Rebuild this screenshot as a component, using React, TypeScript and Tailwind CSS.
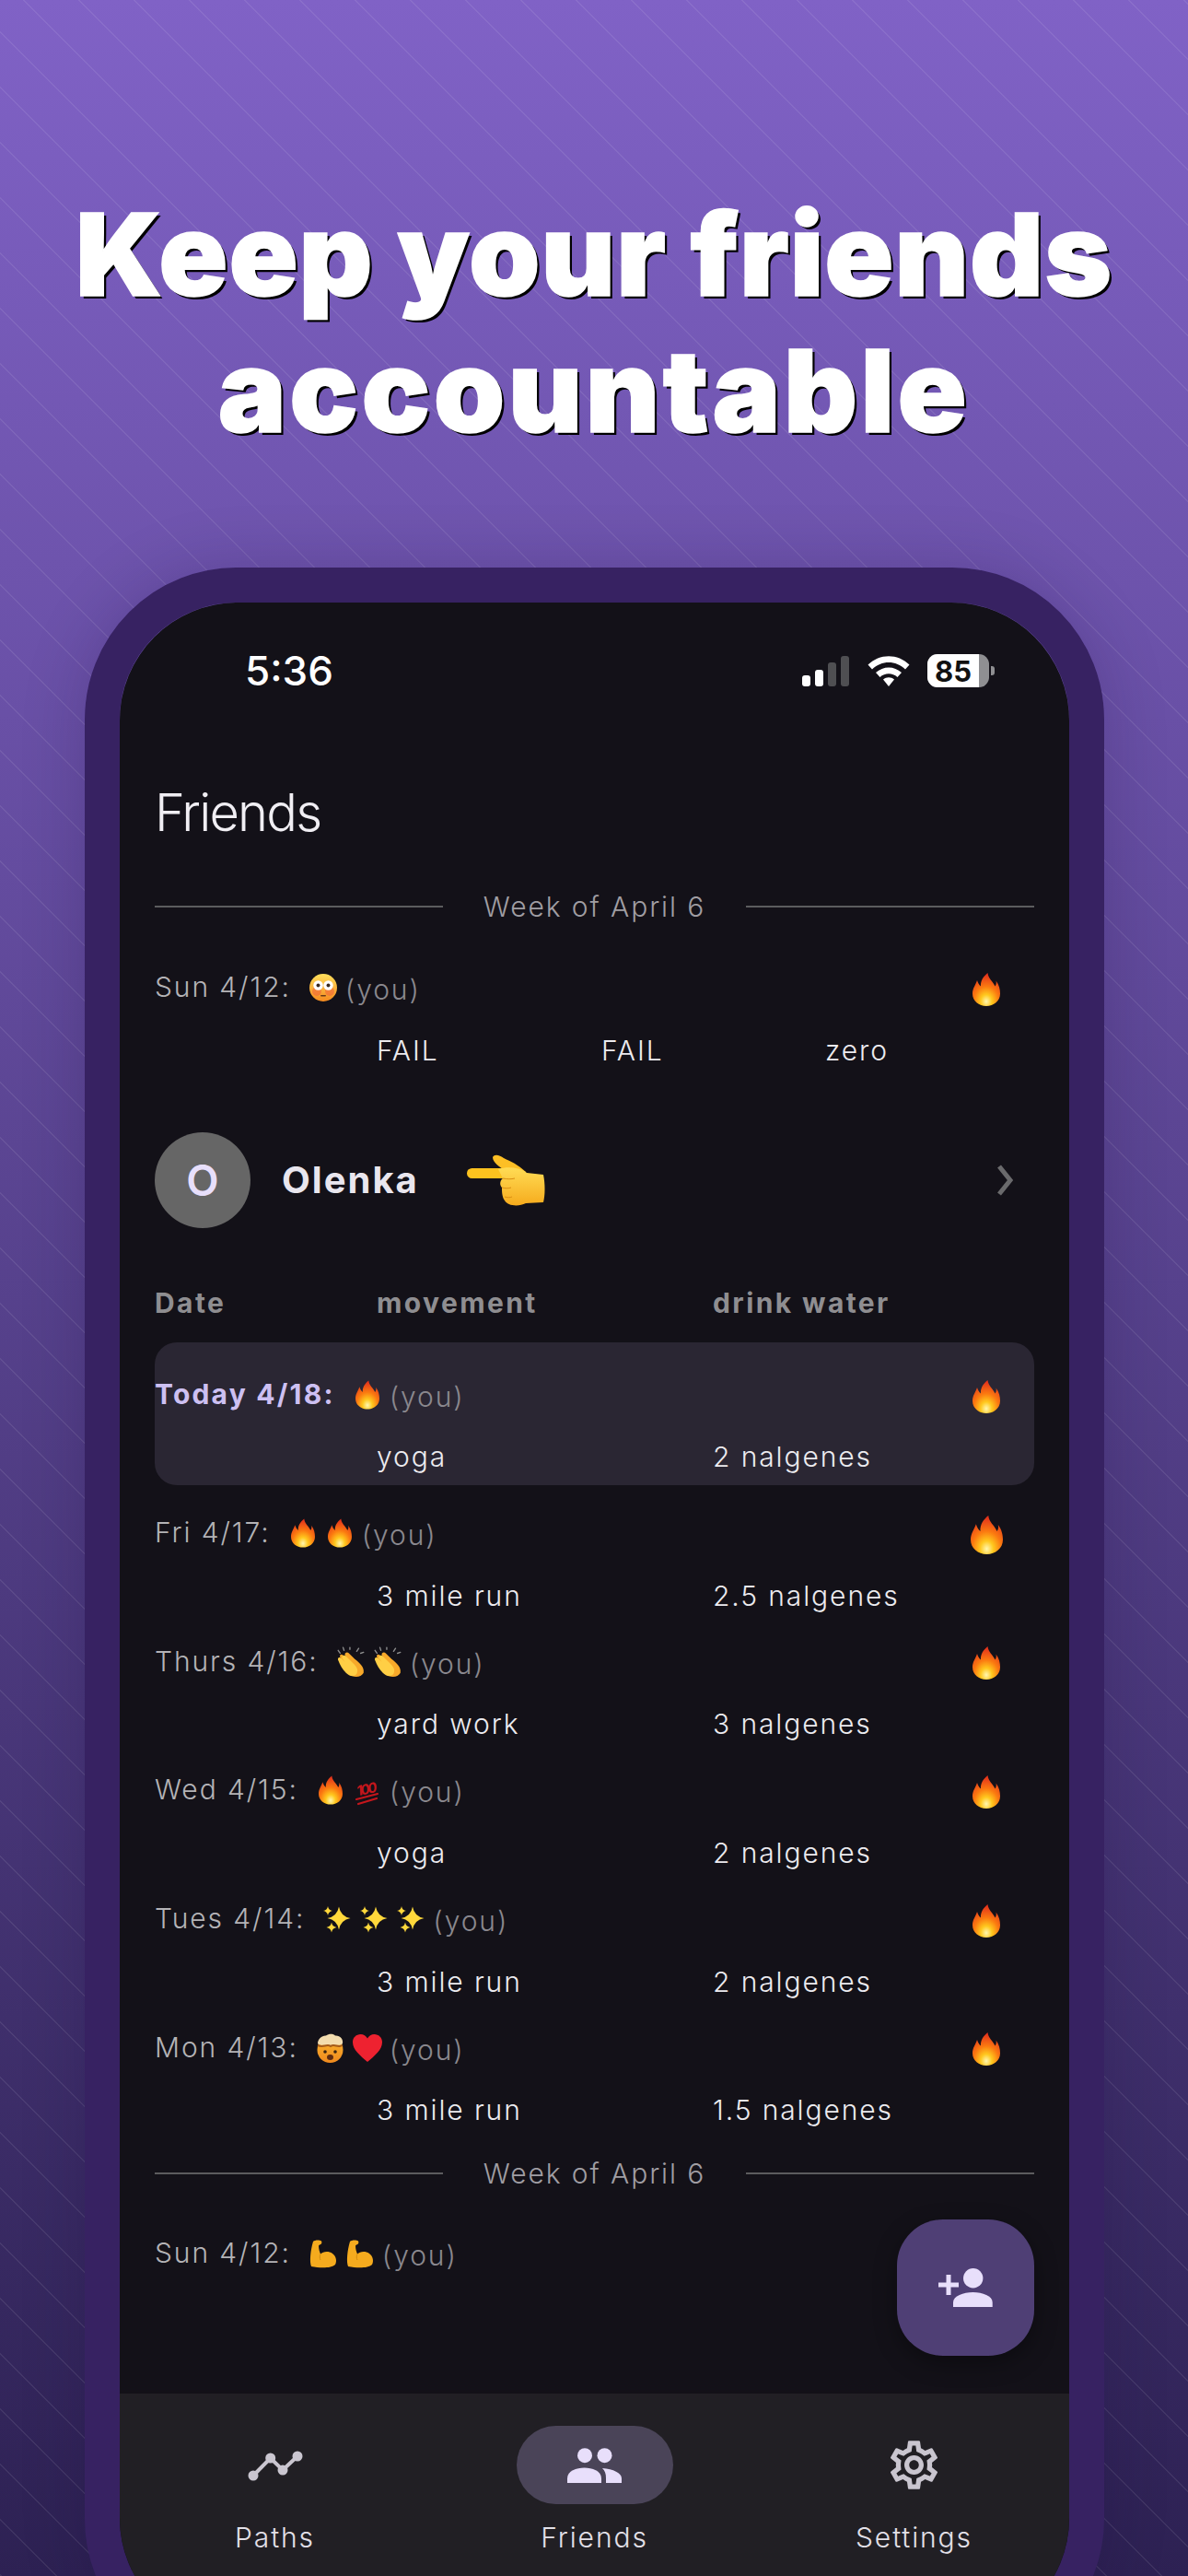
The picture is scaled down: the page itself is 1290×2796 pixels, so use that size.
import React, { useId } from "react";
import { MdOutlineSettings } from "react-icons/md";

const Flame = ({ w = 26, h = 32 }: { w?: number; h?: number }) => {
  const id = useId();
  return (
    <svg width={w} height={h} viewBox="0 0 30 36">
      <defs>
        <radialGradient id={id} cx="0.5" cy="0.86" r="0.82">
          <stop offset="0" stopColor="#fff7b0" />
          <stop offset="0.25" stopColor="#ffc81e" />
          <stop offset="0.55" stopColor="#fb7a10" />
          <stop offset="1" stopColor="#e2301c" />
        </radialGradient>
      </defs>
      <path d="M16.5 0C17 6 22 9 24.5 14.5C26 12.5 26 10.5 25.5 8.5C29 13 30 18 30 22.5C30 30.5 23 36 15 36C7 36 0 30.5 0 22.5C0 16.5 3.5 13 5 8C6 11 7 13 9 14.5C8.5 8.5 12 3.5 16.5 0Z" fill={`url(#${id})`} />
    </svg>
  );
};

const Flushed = () => {
  const id = useId();
  return (
    <svg width="30" height="30" viewBox="0 0 30 30">
      <defs>
        <linearGradient id={id} x1="0" y1="0" x2="0" y2="1">
          <stop offset="0" stopColor="#ffdf5c" />
          <stop offset="1" stopColor="#f58a1f" />
        </linearGradient>
      </defs>
      <circle cx="15" cy="15" r="15" fill={`url(#${id})`} />
      <circle cx="8" cy="19" r="5" fill="#f0603a" opacity="0.55" />
      <circle cx="22" cy="19" r="5" fill="#f0603a" opacity="0.55" />
      <circle cx="9.5" cy="12.5" r="5.2" fill="#fff" />
      <circle cx="20.5" cy="12.5" r="5.2" fill="#fff" />
      <circle cx="9.5" cy="12.5" r="2" fill="#3a2a20" />
      <circle cx="20.5" cy="12.5" r="2" fill="#3a2a20" />
      <rect x="12" y="23" width="6" height="1.6" rx="0.8" fill="#6b3a18" />
    </svg>
  );
};

const Hand = () => {
  const id = useId();
  return (
    <svg width="87" height="57" viewBox="0 0 87 57">
      <defs>
        <linearGradient id={id} x1="0" y1="0" x2="0" y2="1">
          <stop offset="0" stopColor="#ffdc55" />
          <stop offset="1" stopColor="#f6ab1d" />
        </linearGradient>
      </defs>
      <rect x="2" y="15" width="48" height="11" rx="5.5" fill="#fcc21f" />
      <path d="M30 3C32 -1 38 1 42 4C50 8 58 11 67 20L44 18C38 14 30 9 30 3Z" fill="#fdbf25" />
      <path d="M36 16C46 13 60 14 67 20L85 22C87 32 87 44 85 52L66 53C58 57 46 56 43 50C40 46 40 40 40 36C37 33 38 28 41 26Z" fill={`url(#${id})`} />
      <path d="M41 26C46 27 50 27 54 26M40 36C44 37 47 37 50 36M43 46C46 47 49 47 51 46" stroke="#d98e12" strokeWidth="1" fill="none" />
    </svg>
  );
};

const Clap = () => (
  <svg width="32" height="35" viewBox="0 0 30 33">
    <path d="M2 5L4 8M7 2L8 5M23 3L21 6M28 7L25 8M14 2L14 4" stroke="#8d8d8d" strokeWidth="1.3" strokeLinecap="round" />
    <path d="M4 12C3 10 5 8 7 10L11 14L9 10C8 8 11 6 13 8L19 14C24 18 29 22 28 28C26 32 20 33 16 31C11 29 8 23 4 12Z" fill="#f7a92a" />
    <path d="M2 15C1 13 3 11 5 13L9 17L6 13C5 11 8 9 10 11L17 18C21 22 23 25 21 29C18 33 13 31 10 28C6 24 4 20 2 15Z" fill="#ffcf45" />
  </svg>
);

const Hundred = () => (
  <svg width="28" height="33" viewBox="0 0 28 33">
    <text x="14" y="20" textAnchor="middle" fontFamily="Inter, sans-serif" fontStyle="italic" fontWeight="700" fontSize="15" fill="#c4161c" textLength="24" transform="rotate(-12 14 14)">100</text>
    <path d="M2 26L25 20M4 31L24 25" stroke="#c4161c" strokeWidth="2.2" strokeLinecap="round" />
  </svg>
);

const Star = ({ cx, cy, r }: { cx: number; cy: number; r: number }) => (
  <path d={`M${cx} ${cy - r}Q${cx + r * 0.15} ${cy - r * 0.15} ${cx + r} ${cy}Q${cx + r * 0.15} ${cy + r * 0.15} ${cx} ${cy + r}Q${cx - r * 0.15} ${cy + r * 0.15} ${cx - r} ${cy}Q${cx - r * 0.15} ${cy - r * 0.15} ${cx} ${cy - r}Z`} fill="#ffd83b" />
);

const Sparkles = () => (
  <svg width="30" height="30" viewBox="0 0 30 30">
    <Star cx={17} cy={14} r={12.5} />
    <Star cx={5} cy={6} r={5} />
    <Star cx={9} cy={24} r={5.5} />
  </svg>
);

const Exploding = () => {
  const id = useId();
  return (
    <svg width="33" height="32" viewBox="0 0 33 32">
      <defs>
        <linearGradient id={id} x1="0" y1="0" x2="0" y2="1">
          <stop offset="0" stopColor="#f9b52e" />
          <stop offset="1" stopColor="#f08a1e" />
        </linearGradient>
      </defs>
      <circle cx="16.5" cy="18" r="14" fill={`url(#${id})`} />
      <path d="M3 11C3 6 8 2 12 2.5C15 0 20 0 22 2.5C27 2 31 6 30 11C28 14 22 12 16 13C10 12 5 14 3 11Z" fill="#f3dcae" />
      <path d="M3 13C9 16 13 11 17 14C21 11 25 16 30 13" stroke="#a35a1a" strokeWidth="2" fill="none" />
      <circle cx="11" cy="20" r="1.8" fill="#3a2412" />
      <circle cx="22" cy="20" r="1.8" fill="#3a2412" />
      <ellipse cx="16.5" cy="26" rx="3.5" ry="3" fill="#5f2c10" />
    </svg>
  );
};

const Heart = () => (
  <svg width="32" height="30" viewBox="0 0 32 30">
    <path d="M16 30C8 23 0 17 0 8.5C0 3.5 4 0 8.5 0C11.8 0 14.6 1.8 16 4.6C17.4 1.8 20.2 0 23.5 0C28 0 32 3.5 32 8.5C32 17 24 23 16 30Z" fill="#ee2230" />
  </svg>
);

const Muscle = () => (
  <svg width="31" height="31" viewBox="0 0 31 31">
    <path d="M5 2C7 0 12 0 14 1.5C15 3 14 5 12 5.5L11 6.5C11 10 12 13 13 15.5C16 12.5 22 12 26 15C30 18 31 23 29 27C25 31 13 31 3 29C1 24 2 12 5 2Z" fill="#f5ab1e" />
    <path d="M13 15.5C12 18 12 20 13 22" stroke="#d08a10" strokeWidth="1" fill="none" />
  </svg>
);

const Cell = ({ children }: { children: React.ReactNode }) => (
  <span className="flex h-[40px] w-[40px] items-center justify-center">{children}</span>
);

const You = () => <span className="mt-[5px] ml-[4px] text-[#8a888e]">(you)</span>;

const Rule = () => (
  <div className="flex h-[44px] items-center">
    <div className="h-[2px] w-[313px] bg-[#5c5c5e]" />
    <div className="flex-1 text-center text-[#a09ea3]">Week of April 6</div>
    <div className="h-[2px] w-[313px] bg-[#5c5c5e]" />
  </div>
);

const DayLine = ({
  date,
  emojis,
  today,
  big,
}: {
  date: string;
  emojis: React.ReactNode[];
  today?: boolean;
  big?: boolean;
}) => (
  <div className="flex h-[68px] items-center">
    <span className={today ? "-mt-[2px] font-bold tracking-[2.2px] text-[#cdc0f2]" : "-mt-[1px] text-[#b4b3b6]"}>{date}</span>
    <span className="ml-[15px] flex">
      {emojis.map((e, i) => (
        <Cell key={i}>{e}</Cell>
      ))}
    </span>
    <You />
    <span className="mt-[3px] ml-auto flex w-[104px] items-center justify-center">
      {big ? <Flame w={35} h={42} /> : <Flame w={30} h={36} />}
    </span>
  </div>
);

const Values = ({ a, b }: { a: string; b: string }) => (
  <div className="flex h-[68px] items-center pl-[241px] text-[#ecebef]">
    <span className="w-[365px]">{a}</span>
    <span>{b}</span>
  </div>
);

const Day = (p: { date: string; emojis: React.ReactNode[]; a: string; b: string; big?: boolean }) => (
  <div className="pb-[3.7px]">
    <DayLine date={p.date} emojis={p.emojis} big={p.big} />
    <Values a={p.a} b={p.b} />
  </div>
);

export default function App() {
  return (
    <div className="h-[2796px] w-[1290px] overflow-hidden bg-[repeating-linear-gradient(45deg,#ffffff14_0,#ffffff14_1.5px,transparent_1.5px,transparent_42.43px),linear-gradient(180deg,#8062c6,#2d2153)] [font-family:Inter,sans-serif]">
      <h1 className="pt-[202px] text-center text-[124px] leading-[148px] font-black text-white [-webkit-text-stroke:1.5px_white] [text-shadow:3px_3px_0_#000]">
        <span className="tracking-[1px]">Keep your friends</span>
        <br />
        <span className="tracking-[3.5px]">accountable</span>
      </h1>

      <div className="mt-[118px] ml-[92px] h-[2283px] w-[1107px] rounded-[165px] border-[38px] border-[#372262] shadow-[0_0_70px_rgba(20,10,50,0.18)]">
        <div className="relative flex h-full flex-col overflow-hidden rounded-[128px] bg-[#131118] text-[30px] font-light tracking-[1.9px]">
          {/* status bar */}
          <div className="flex h-[148px] shrink-0 items-center pr-[81px] pl-[136px] text-white">
            <span className="text-[44px] font-medium tracking-normal">5:36</span>
            <div className="ml-auto flex items-center">
              <svg width="52" height="33" viewBox="0 0 52 33">
                <rect x="0" y="21" width="9" height="12" rx="3" fill="#fff" />
                <rect x="14" y="15" width="9" height="18" rx="3" fill="#fff" />
                <rect x="28" y="7" width="9" height="26" rx="3" fill="#4f4f52" />
                <rect x="42" y="0" width="9" height="33" rx="3" fill="#4f4f52" />
              </svg>
              <svg className="ml-[19px]" width="46" height="33" viewBox="0 0 46 33">
                <path d="M0.5 9.5C13 -3 33 -3 45.5 9.5L41 14.5C31 4.5 15 4.5 5 14.5Z" fill="#fff" />
                <path d="M9 18C17 10.5 29 10.5 37 18L32.5 23C27 18 19 18 13.5 23Z" fill="#fff" />
                <path d="M17 25.5C20.5 22.5 25.5 22.5 29 25.5L23 33Z" fill="#fff" />
              </svg>
              <div className="ml-[19px] flex h-[36px] w-[67px] items-center rounded-[11px] bg-[#8f8f92]">
                <div className="flex h-full w-[56px] items-center justify-center rounded-l-[11px] bg-white text-[31px] leading-none font-bold tracking-normal text-[#111]">
                  85
                </div>
              </div>
              <div className="ml-[2px] h-[10px] w-[4px] rounded-r-[3px] bg-[#8f8f92]" />
            </div>
          </div>

          {/* content */}
          <div className="flex flex-1 flex-col px-[38px]">
            <div className="mt-[40px] h-[80px] text-[56px] leading-[80px] font-light tracking-[-1.8px] text-[#f0eef3]">
              Friends
            </div>
            <div className="mt-[40px]">
              <Rule />
            </div>

            <div className="mt-[32px]">
              <DayLine date="Sun 4/12:" emojis={[<Flushed key="f" />]} />
              <div className="flex h-[68px] items-center pl-[241px] text-[#ecebef]">
                <span className="w-[244px]">FAIL</span>
                <span className="w-[243px]">FAIL</span>
                <span>zero</span>
              </div>
            </div>

            <div className="mt-[55px] flex h-[104px] items-center">
              <div className="flex h-[104px] w-[104px] items-center justify-center rounded-full bg-[#666666] text-[46px] font-semibold tracking-normal text-[#e8dffb]">
                O
              </div>
              <span className="ml-[34px] text-[40px] font-bold tracking-[2px] text-[#e9e6ee]">Olenka</span>
              <span className="ml-[50px] flex">
                <Hand />
              </span>
              <svg className="mr-[23px] ml-auto" width="18" height="36" viewBox="0 0 18 36">
                <path d="M3 3L15 18L3 33" stroke="#6a6a6c" strokeWidth="5" fill="none" />
              </svg>
            </div>

            <div className="mt-[61px] flex h-[40px] items-center font-bold tracking-[2.4px] text-[#8f8e91]">
              <span className="w-[241px]">Date</span>
              <span className="w-[365px]">movement</span>
              <span>drink water</span>
            </div>

            <div className="mt-[23px] mb-[18px] h-[155px] rounded-[24px] bg-[#2a2633] pt-[23px]">
              <DayLine date="Today 4/18:" emojis={[<Flame key="a" />]} today />
              <div className="-mt-px">
                <Values a="yoga" b="2 nalgenes" />
              </div>
            </div>

            <Day date="Fri 4/17:" emojis={[<Flame key="a" />, <Flame key="b" />]} a="3 mile run" b="2.5 nalgenes" big />
            <Day date="Thurs 4/16:" emojis={[<Clap key="a" />, <Clap key="b" />]} a="yard work" b="3 nalgenes" />
            <Day date="Wed 4/15:" emojis={[<Flame key="a" />, <Hundred key="b" />]} a="yoga" b="2 nalgenes" />
            <Day date="Tues 4/14:" emojis={[<Sparkles key="a" />, <Sparkles key="b" />, <Sparkles key="c" />]} a="3 mile run" b="2 nalgenes" />
            <Day date="Mon 4/13:" emojis={[<Exploding key="a" />, <Heart key="b" />]} a="3 mile run" b="1.5 nalgenes" />

            <div className="mt-[9px]">
              <Rule />
            </div>
            <div className="mt-[31px]">
              <div className="flex h-[68px] items-center">
                <span className="-mt-[1px] text-[#b4b3b6]">Sun 4/12:</span>
                <span className="ml-[15px] flex">
                  <Cell><Muscle /></Cell>
                  <Cell><Muscle /></Cell>
                </span>
                <You />
              </div>
            </div>
          </div>

          {/* FAB */}
          <div className="absolute top-[1755px] left-[844px] flex h-[148px] w-[149px] items-center justify-center rounded-[50px] bg-[#4f3f75] shadow-[0_8px_24px_rgba(0,0,0,0.35)]">
            <svg width="59" height="42" viewBox="0 0 59 42">
              <rect x="0" y="15.5" width="22" height="5" fill="#e8dffb" />
              <rect x="8.5" y="7" width="5" height="22" fill="#e8dffb" />
              <circle cx="37.7" cy="10.7" r="10.7" fill="#e8dffb" />
              <path d="M16 42V37C16 30 27 26 37.5 26C48 26 58.7 30 58.7 37V42Z" fill="#e8dffb" />
            </svg>
          </div>

          {/* tab bar */}
          <div className="flex h-[263px] shrink-0 justify-center bg-[#211f24] text-[#e3e0e8]">
            <div className="flex w-[347px] shrink-0 flex-col items-center pt-[35px]">
              <div className="flex h-[85px] w-[170px] items-center justify-center">
                <svg width="68" height="34" viewBox="0 0 68 34">
                  <path d="M10 28L28.7 9L42 22L58 7" stroke="#cac6d0" strokeWidth="4" fill="none" />
                  <circle cx="10" cy="28" r="5.5" fill="#cac6d0" />
                  <circle cx="28.7" cy="9" r="5.5" fill="#cac6d0" />
                  <circle cx="42" cy="22" r="5.5" fill="#cac6d0" />
                  <circle cx="58" cy="7" r="5.5" fill="#cac6d0" />
                </svg>
              </div>
              <span className="mt-[14px]">Paths</span>
            </div>
            <div className="flex w-[347px] shrink-0 flex-col items-center pt-[35px]">
              <div className="flex h-[85px] w-[170px] items-center justify-center rounded-full bg-[#4a4458]">
                <svg width="60" height="38" viewBox="0 0 60 38">
                  <circle cx="19" cy="8.2" r="8" fill="#e8dffb" />
                  <circle cx="40.5" cy="8.2" r="8" fill="#e8dffb" />
                  <path d="M0 38V33C0 25 10 21.5 18.5 21.5C27 21.5 37 25 37 33V38Z" fill="#e8dffb" />
                  <path d="M38 22C50 23 59 27 59 33V38H42V33C42 28 41 25 38 22Z" fill="#e8dffb" />
                </svg>
              </div>
              <span className="mt-[14px]">Friends</span>
            </div>
            <div className="flex w-[347px] shrink-0 flex-col items-center pt-[35px]">
              <div className="flex h-[85px] w-[170px] items-center justify-center">
                <MdOutlineSettings size={63} color="#c9c5cf" />
              </div>
              <span className="mt-[14px]">Settings</span>
            </div>
          </div>
        </div>
      </div>
    </div>
  );
}
